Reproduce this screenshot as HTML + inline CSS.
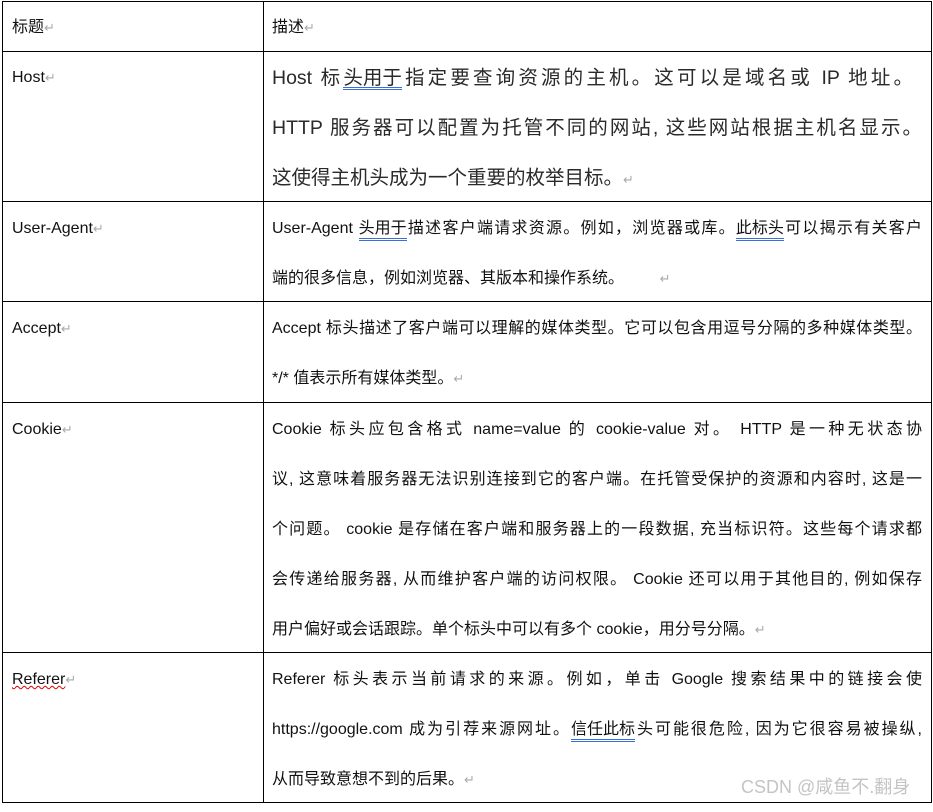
<!DOCTYPE html>
<html><head><meta charset="utf-8"><style>
body{margin:0;width:933px;height:806px;background:#fff;position:relative;overflow:hidden;font-family:"Liberation Sans","Noto Sans CJK SC",sans-serif;color:#111;}
.h{position:absolute;background:#000;height:1px;left:2px;width:930px}
.v{position:absolute;background:#000;width:1px;top:1px;height:802px}
.t{position:absolute;font-size:16px;line-height:50px;height:50px;white-space:nowrap}
.j{text-align:justify;text-align-last:justify;white-space:normal;width:650px;left:272px}
.l{left:12px}
.c{left:272px}
.big{font-size:19.5px;color:#2a2a2a;top:2px}
.r{color:#aaa;font-size:13px}
.u{border-bottom:3px double #3a6fd8;line-height:18px;display:inline-block}
.w{text-decoration:underline wavy #d00;text-decoration-thickness:1px}
</style></head><body>
<div class="h" style="top:1px"></div>
<div class="h" style="top:51px"></div>
<div class="h" style="top:201px"></div>
<div class="h" style="top:301px"></div>
<div class="h" style="top:402px"></div>
<div class="h" style="top:652px"></div>
<div class="h" style="top:802px"></div>
<div class="v" style="left:2px"></div>
<div class="v" style="left:263px"></div>
<div class="v" style="left:931px"></div>

<div class="t l" style="top:3px">标题<span class="r">↵</span></div>
<div class="t c" style="top:3px">描述<span class="r">↵</span></div>

<div class="t l" style="top:53px">Host<span class="r">↵</span></div>
<div class="t j big" style="top:53px;width:641px">Host 标<span class="u">头用于</span>指定要查询资源的主机。这可以是域名或 IP 地址。</div>
<div class="t j big" style="top:103px">HTTP 服务器可以配置为托管不同的网站, 这些网站根据主机名显示。</div>
<div class="t c big" style="top:153px">这使得主机头成为一个重要的枚举目标。<span class="r">↵</span></div>

<div class="t l" style="top:204px">User-Agent<span class="r">↵</span></div>
<div class="t j" style="top:204px">User-Agent <span class="u">头用于</span>描述客户端请求资源。例如，浏览器或库。<span class="u">此标头</span>可以揭示有关客户</div>
<div class="t c" style="top:254px">端的很多信息，例如浏览器、其版本和操作系统。&nbsp;&nbsp;&nbsp;&nbsp;&nbsp;&nbsp;&nbsp;&nbsp;<span class="r">↵</span></div>

<div class="t l" style="top:304px">Accept<span class="r">↵</span></div>
<div class="t j" style="top:304px">Accept 标头描述了客户端可以理解的媒体类型。它可以包含用逗号分隔的多种媒体类型。</div>
<div class="t c" style="top:354px">*/* 值表示所有媒体类型。<span class="r">↵</span></div>

<div class="t l" style="top:405px">Cookie<span class="r">↵</span></div>
<div class="t j" style="top:405px">Cookie 标头应包含格式 name=value 的 cookie-value 对。 HTTP 是一种无状态协</div>
<div class="t j" style="top:455px">议, 这意味着服务器无法识别连接到它的客户端。在托管受保护的资源和内容时, 这是一</div>
<div class="t j" style="top:505px">个问题。 cookie 是存储在客户端和服务器上的一段数据, 充当标识符。这些每个请求都</div>
<div class="t j" style="top:555px">会传递给服务器, 从而维护客户端的访问权限。 Cookie 还可以用于其他目的, 例如保存</div>
<div class="t c" style="top:605px">用户偏好或会话跟踪。单个标头中可以有多个 cookie，用分号分隔。<span class="r">↵</span></div>

<div class="t l" style="top:655px"><span class="w">Referer</span><span class="r">↵</span></div>
<div class="t j" style="top:655px">Referer 标头表示当前请求的来源。例如，单击 Google 搜索结果中的链接会使</div>
<div class="t j" style="top:705px">https://google.com 成为引荐来源网址。<span class="u">信任此标</span>头可能很危险, 因为它很容易被操纵,</div>
<div class="t c" style="top:755px">从而导致意想不到的后果。<span class="r">↵</span></div>

<div class="t" style="top:762px;left:741px;color:#c4c4c4;font-size:18px">CSDN @咸鱼不.翻身</div>
</body></html>
